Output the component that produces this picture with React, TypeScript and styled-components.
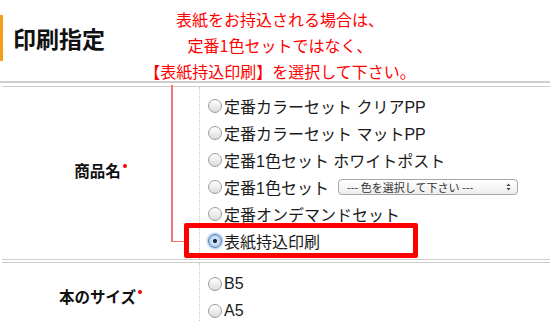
import React from 'react'
import styled, { createGlobalStyle } from 'styled-components'

const GlobalStyle = createGlobalStyle`
  html, body {
    margin: 0;
    padding: 0;
    background: #fff;
  }
  body {
    width: 550px;
    height: 322px;
    overflow: hidden;
    font-family: 'Liberation Sans', 'Noto Sans CJK JP', sans-serif;
    color: #222;
  }
`

const Page = styled.div`
  position: relative;
  width: 550px;
  height: 322px;
  overflow: hidden;
`

const Header = styled.header`
  display: flex;
  height: 81px;
`

const Title = styled.h1`
  margin: 15px 0 0;
  width: 107px;
  height: 46px;
  padding-left: 10px;
  border-left: 3px solid #f6a01a;
  font: bold 23px/46px 'Noto Sans CJK JP', sans-serif;
  color: #111;
`

const Notice = styled.p`
  margin: 0;
  width: 320px;
  padding-top: 6px;
  font: 16px/26px 'Noto Sans CJK JP', sans-serif;
  color: #ff0000;
  text-align: center;
  white-space: nowrap;
`

const Table = styled.div`
  display: grid;
  gap: 2px;
  border-top: 2px solid #cfcfcf;
  padding: 3px 0 0 2px;
`

const Row = styled.div`
  display: grid;
  grid-template-columns: 197px 1fr;
  border-top: 1px solid #cdcdcd;
  border-bottom: 1px solid #cdcdcd;
`

const LabelCell = styled.div<{ $lift?: number }>`
  display: flex;
  align-items: center;
  justify-content: center;
  padding-bottom: ${(p) => p.$lift ?? 0}px;
  font: bold 15.5px 'Noto Sans CJK JP', sans-serif;
  color: #111;
`

const Required = styled.span`
  display: inline-block;
  width: 4px;
  height: 4px;
  margin: 0 0 9px 2px;
  border-radius: 50%;
  background: #ff0000;
`

const FieldCell = styled.div<{ $top: number }>`
  display: flex;
  flex-direction: column;
  padding: ${(p) => p.$top}px 0 5px 8px;
  border-left: 1px dotted #c8c8c8;
`

const Option = styled.label`
  display: flex;
  align-items: center;
  height: 27px;
  font-size: 16px;
  color: #1a1a1a;
  white-space: nowrap;
`

const Radio = styled.input`
  appearance: none;
  box-sizing: border-box;
  width: 14px;
  height: 14px;
  margin: 1px 2px 0 0;
  border: 1px solid #9c9c9c;
  border-radius: 50%;
  background: linear-gradient(#ffffff, #dcdcdc);

  &:checked {
    border-color: #5d7fae;
    background: radial-gradient(circle, #1c2a3c 0 1.6px, #d4e6fb 2.4px, #8fb6e6 100%);
    box-shadow: 0 0 2px 1px #9cc3f0;
  }
`

const SelectWrap = styled.span`
  position: relative;
  display: inline-flex;
  margin-left: 9px;
`

const Select = styled.select`
  appearance: none;
  box-sizing: border-box;
  width: 180px;
  height: 16px;
  padding: 0 0 0 8px;
  border: 1px solid #a6a6a6;
  border-radius: 4px;
  background: linear-gradient(#ffffff, #ededed);
  font: 11px 'Noto Sans CJK JP', sans-serif;
  line-height: 14px;
  color: #333;
`

const Arrows = styled.svg`
  position: absolute;
  right: 7px;
  top: 4px;
  pointer-events: none;
`

const Leader = styled.div`
  position: absolute;
  left: 171px;
  top: 85px;
  width: 13px;
  height: 156px;
  border-left: 2px solid #f77272;
  border-bottom: 1px solid #f77272;
`

const Highlight = styled.div`
  position: absolute;
  left: 184px;
  top: 223px;
  width: 234px;
  height: 35px;
  box-sizing: border-box;
  border: 5px solid #ff0000;
  border-radius: 2px;
`

const products = [
  '定番カラーセット クリアPP',
  '定番カラーセット マットPP',
  '定番1色セット ホワイトポスト',
  '定番1色セット',
  '定番オンデマンドセット',
  '表紙持込印刷',
]

const sizes = ['B5', 'A5']

export default function App() {
  return (
    <Page>
      <GlobalStyle />
      <Header>
        <Title>印刷指定</Title>
        <Notice>
          表紙をお持込される場合は、
          <br />
          定番1色セットではなく、
          <br />
          【表紙持込印刷】を選択して下さい。
        </Notice>
      </Header>
      <Table>
        <Row>
          <LabelCell $lift={6}>
            商品名
            <Required />
          </LabelCell>
          <FieldCell $top={5}>
            {products.map((name, i) => (
              <Option key={name}>
                <Radio type="radio" name="product" defaultChecked={i === 5} />
                {name}
                {i === 3 && (
                  <SelectWrap>
                    <Select defaultValue="">
                      <option value="">--- 色を選択して下さい ---</option>
                    </Select>
                    <Arrows width="5" height="8" viewBox="0 0 5 8">
                      <path d="M0.5 3 L2.5 0.5 L4.5 3 Z M0.5 5 L2.5 7.5 L4.5 5 Z" fill="#444" />
                    </Arrows>
                  </SelectWrap>
                )}
              </Option>
            ))}
          </FieldCell>
        </Row>
        <Row>
          <LabelCell $lift={0}>
            本のサイズ
            <Required />
          </LabelCell>
          <FieldCell $top={7}>
            {sizes.map((s) => (
              <Option key={s}>
                <Radio type="radio" name="size" />
                {s}
              </Option>
            ))}
          </FieldCell>
        </Row>
      </Table>
      <Leader />
      <Highlight />
    </Page>
  )
}
